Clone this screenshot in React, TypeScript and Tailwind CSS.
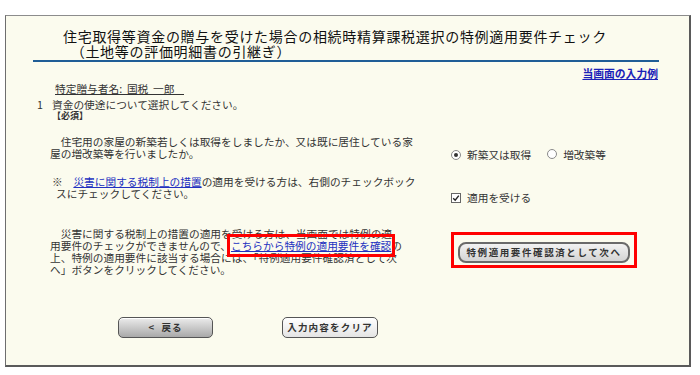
import React from "react";

const jp = "font-['Noto_Sans_CJK_JP','Noto_Sans',sans-serif]";
const sp = "\u3000";

function Radio({ checked }: { checked?: boolean }) {
  return (
    <span className="inline-flex h-[10px] w-[10px] items-center justify-center rounded-full border border-[#8a8a8a] bg-white">
      {checked && <span className="h-[4px] w-[4px] rounded-full bg-[#333]" />}
    </span>
  );
}

function Check() {
  return (
    <span className="inline-flex h-[10px] w-[10px] items-center justify-center border border-[#666] bg-white">
      <svg width="8" height="8" viewBox="0 0 8 8">
        <path d="M1.2 4.2 L3.2 6.2 L6.8 1.6" fill="none" stroke="#222" strokeWidth="1.4" />
      </svg>
    </span>
  );
}

export default function App() {
  return (
    <div className={`h-[375px] w-[700px] bg-white pl-[5px] pt-[15px] ${jp}`}>
      <div className="h-[352px] w-[686px] border-t border-l border-r-2 border-b-2 border-t-[#8c8c8c] border-l-[#6e6e6e] border-r-[#5a5a5a] border-b-[#5a5a5a] bg-[#fbfbee] text-[#333]">
        {/* Title */}
        <div className="pl-[57px] pt-[13px] text-[14px] leading-[15px] tracking-[0.7px] text-[#111]">
          <p>住宅取得等資金の贈与を受けた場合の相続時精算課税選択の特例適用要件チェック</p>
          <p className="whitespace-pre">{sp + "（土地等の評価明細書の引継ぎ）"}</p>
        </div>
        <div className="ml-[27px] mr-[30px] mt-[1px] h-[2px] bg-[#1f5d96]" />

        <div className="mt-[5px] pr-[31px] text-right text-[10.8px] font-bold leading-[12px]">
          <a className="text-[#1a22b8] underline">当画面の入力例</a>
        </div>

        <div className="mt-[4px] pl-[49px] text-[10.7px] leading-[12px]">
          <span className="whitespace-pre underline">{"特定贈与者名:  国税  一郎    "}</span>
        </div>

        {/* Section 1 */}
        <div className="mt-[4px] flex pl-[31px] text-[10.7px] leading-[12px]">
          <span className="w-[15px]">1</span>
          <span>資金の使途について選択してください。</span>
        </div>
        <div className="pl-[46px] text-[9px] font-bold leading-[10px]">【必須】</div>

        <div className="mt-[15px] flex items-start">
          <p className="ml-[44px] w-[372px] text-[10.7px] leading-[12px]">
            {sp}住宅用の家屋の新築若しくは取得をしましたか、又は既に居住している家
            <br />
            屋の増改築等を行いましたか。
          </p>
          <div className="ml-[29px] mt-[13px] flex items-center text-[10.7px] leading-[12px]">
            <Radio checked />
            <span className="ml-[6px]">新築又は取得</span>
            <span className="ml-[16px]">
              <Radio />
            </span>
            <span className="ml-[6px]">増改築等</span>
          </div>
        </div>

        <div className="mt-[15px] flex items-start">
          <p className="ml-[46px] w-[370px] text-[10.7px] leading-[12px]">
            ※{sp}<a className="text-[#2230c0] underline">災害に関する税制上の措置</a>の適用を受ける方は、右側のチェックボック
            <br />
            <span className="pl-[4px]">スにチェックしてください。</span>
          </p>
          <div className="ml-[29px] mt-[16px] flex items-center text-[10.7px] leading-[12px]">
            <Check />
            <span className="ml-[6px]">適用を受ける</span>
          </div>
        </div>

        <div className="mt-[24px] flex items-start">
          <p className="ml-[44px] w-[372px] text-[10.7px] leading-[12px]">
            {sp}災害に関する税制上の措置の適用を受ける方は、当画面では特例の適
            <br />
            用要件のチェックができませんので、
            <a className="text-[#2230c0] underline outline-[3px] outline-offset-[1px] outline-[#ff0000] outline-solid">
              こちらから特例の適用要件を確認
            </a>
            の
            <br />
            上、特例の適用要件に該当する場合には、「特例適用要件確認済として次
            <br />
            へ」ボタンをクリックしてください。
          </p>
          <div className="ml-[29px] mt-[4px] border-[3px] border-[#ff0000] px-[4px] py-[2px]">
            <button
              type="button"
              className="h-[21px] w-[172px] rounded-[8px] border-2 border-[#6a6a6a] bg-gradient-to-b from-[#f2f2f2] to-[#d4d4d4] text-[9.5px] font-bold tracking-[1.6px] text-[#333]"
            >
              特例適用要件確認済として次へ
            </button>
          </div>
        </div>

        {/* Bottom buttons */}
        <div className="mt-[41px] flex pl-[112px]">
          <button
            type="button"
            className="h-[21px] w-[95px] rounded-[5px] border border-[#555] bg-gradient-to-b from-[#ececec] to-[#a9a9a9] text-[9.5px] font-bold tracking-[1px] text-[#333] shadow-[inset_0_1px_0_#fff]"
          >
            <span className="whitespace-pre">{"<  戻る"}</span>
          </button>
          <button
            type="button"
            className="ml-[69px] h-[21px] w-[96px] rounded-[5px] border border-[#555] bg-gradient-to-b from-[#ffffff] to-[#e4e4e4] text-[9.5px] font-bold tracking-[1.2px] text-[#333]"
          >
            入力内容をクリア
          </button>
        </div>
      </div>
    </div>
  );
}
